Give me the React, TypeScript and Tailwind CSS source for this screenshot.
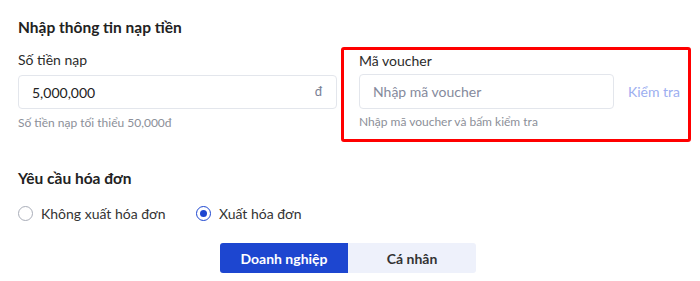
import { useState } from 'react';

export default function App() {
  const [invoice, setInvoice] = useState<'none' | 'yes'>('yes');
  const [type, setType] = useState<'company' | 'personal'>('company');

  return (
    <div className="w-[700px] h-[281px] bg-white pl-[18px] pt-[17px] font-['Lato','Noto_Sans',sans-serif] text-[#2b2b2b] overflow-hidden">
      {/* Header */}
      <h2 className="text-[15.5px] leading-5 font-bold text-[#222]">Nhập thông tin nạp tiền</h2>

      <div className="flex items-start mt-[10px]">
        {/* Amount */}
        <div className="w-[319px] pt-[3px]">
          <div className="text-[14px] leading-5 text-[#2b2b2b]">Số tiền nạp</div>
          <div className="mt-[5px] h-[34px] border border-[#e3e6ec] rounded-[4px] flex items-center justify-between px-[13px]">
            <span className="text-[14px] text-[#222]">5,000,000</span>
            <span className="text-[13px] text-[#7a8094] pr-[1px]">đ</span>
          </div>
          <div className="mt-[6px] text-[12px] leading-4 text-[#8c8f99]">Số tiền nạp tối thiểu 50,000đ</div>
        </div>

        {/* Voucher */}
        <div className="ml-[4px] w-[350px] border-[3px] border-[#ff0000] rounded-[3px] pl-[15px] pr-[8px] pt-[1px] pb-[9px]">
          <div className="text-[14px] leading-5 text-[#2b2b2b]">Mã voucher</div>
          <div className="mt-[3px] flex items-center">
            <input
              placeholder="Nhập mã voucher"
              className="w-[255px] h-[35px] border border-[#e3e6ec] rounded-[4px] px-[13px] text-[14px] outline-none placeholder:text-[#858a9c]"
            />
            <button className="ml-auto text-[14px] text-[#9caef0]">Kiểm tra</button>
          </div>
          <div className="mt-[5px] text-[12px] leading-4 text-[#8c8f99]">Nhập mã voucher và bấm kiểm tra</div>
        </div>
      </div>

      {/* Invoice */}
      <h2 className="mt-[26px] text-[15.5px] leading-5 font-bold text-[#222]">Yêu cầu hóa đơn</h2>
      <div className="mt-[15px] flex items-center h-5">
        <button onClick={() => setInvoice('none')} className="flex items-center gap-[8px] w-[178px]">
          <span className={`w-[15px] h-[15px] rounded-full border flex items-center justify-center ${invoice === 'none' ? 'border-[#1d46d0]' : 'border-[#a9adb8]'}`}>
            {invoice === 'none' && <span className="w-[7px] h-[7px] rounded-full bg-[#1d46d0]" />}
          </span>
          <span className="text-[14px] text-[#333]">Không xuất hóa đơn</span>
        </button>
        <button onClick={() => setInvoice('yes')} className="flex items-center gap-[8px]">
          <span className={`w-[15px] h-[15px] rounded-full border flex items-center justify-center ${invoice === 'yes' ? 'border-[#1d46d0]' : 'border-[#a9adb8]'}`}>
            {invoice === 'yes' && <span className="w-[7px] h-[7px] rounded-full bg-[#1d46d0]" />}
          </span>
          <span className="text-[14px] text-[#333]">Xuất hóa đơn</span>
        </button>
      </div>

      <div className="mt-[20px] flex pl-[202px]">
        <button
          onClick={() => setType('company')}
          className={`w-[128px] h-[30px] rounded-l-[3px] text-[14px] font-bold ${type === 'company' ? 'bg-[#1d46d0] text-white' : 'bg-[#eef1fb] text-[#333]'}`}
        >
          Doanh nghiệp
        </button>
        <button
          onClick={() => setType('personal')}
          className={`w-[128px] h-[30px] rounded-r-[3px] text-[14px] font-bold ${type === 'personal' ? 'bg-[#1d46d0] text-white' : 'bg-[#eef1fb] text-[#333]'}`}
        >
          Cá nhân
        </button>
      </div>
    </div>
  );
}
